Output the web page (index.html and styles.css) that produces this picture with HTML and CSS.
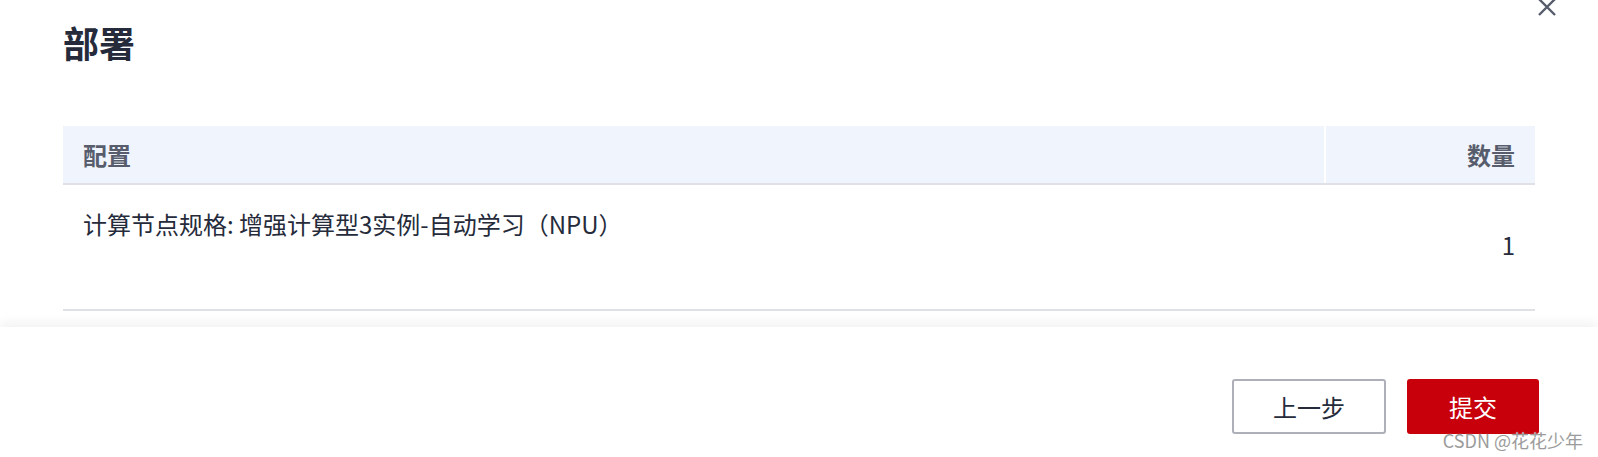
FILE: index.html
```html
<!DOCTYPE html>
<html lang="zh-CN">
<head>
<meta charset="utf-8">
<title>部署</title>
<link rel="stylesheet" href="styles.css">
</head>
<body>
<div class="dialog">
  <button class="close" aria-label="关闭">
    <svg width="20" height="20" viewBox="0 0 20 20"><path d="M2 2 L18 18 M18 2 L2 18" stroke="#575d6c" stroke-width="2.4" fill="none"/></svg>
  </button>
  <h1 class="title">部署</h1>
  <table class="table">
    <thead>
      <tr><th class="col-config">配置</th><th class="col-count">数量</th></tr>
    </thead>
    <tbody>
      <tr><td class="cell-config">计算节点规格: 增强计算型3实例-自动学习（NPU）</td><td class="cell-count">1</td></tr>
    </tbody>
  </table>
</div>
<div class="footer">
  <button class="btn btn-default">上一步</button>
  <button class="btn btn-primary">提交</button>
</div>
<div class="watermark">CSDN @花花少年</div>
</body>
</html>
```
FILE: styles.css
```css
* { box-sizing: border-box; }
html, body { margin: 0; padding: 0; background: #fff; }
body {
  font-family: "Noto Sans CJK SC", "Noto Sans", sans-serif;
  color: #252b3a;
  width: 1598px;
  height: 457px;
  overflow: hidden;
  position: relative;
}
.dialog {
  padding: 18px 63px 0 63px;
  position: relative;
}
.close {
  position: absolute;
  top: -3px;
  right: 41px;
  width: 20px;
  height: 20px;
  padding: 0;
  border: 0;
  background: none;
  display: block;
}
.close svg { display: block; }
.title {
  margin: 0 0 60px 0;
  font-size: 36px;
  line-height: 48px;
  font-weight: 700;
  color: #252b3a;
}
.table {
  width: 100%;
  border-collapse: collapse;
  border-spacing: 0;
  table-layout: fixed;
}
.table th {
  height: 58px;
  background: #f0f4fc;
  border-bottom: 2px solid #dfe1e6;
  font-size: 24px;
  line-height: 32px;
  font-weight: 700;
  color: #575d6c;
  padding: 0 20px;
  vertical-align: middle;
}
.col-config { text-align: left; border-right: 2px solid #fff; }
.col-count { text-align: right; width: 210px; }
.table td {
  height: 126px;
  border-bottom: 2px solid #dfe1e6;
  font-size: 24px;
  line-height: 32px;
  color: #252b3a;
  padding: 0 20px;
}
.cell-config { vertical-align: top; padding-top: 23px !important; }
.cell-count { vertical-align: middle; text-align: right; padding-bottom: 4px !important; }
.footer {
  margin-top: 16px;
  height: 131px;
  padding: 52px 59px 0 0;
  display: flex;
  justify-content: flex-end;
  align-items: flex-start;
  gap: 21px;
  background: #fff;
  box-shadow: 0 -5px 10px rgba(0, 0, 0, 0.05);
}
.btn {
  height: 55px;
  border-radius: 3px;
  font-family: "Noto Sans CJK SC", "Noto Sans", sans-serif;
  font-size: 24px;
  line-height: 32px;
  padding: 0;
  cursor: pointer;
}
.btn-default {
  width: 154px;
  background: #fff;
  border: 2px solid #adb0b8;
  color: #252b3a;
}
.btn-primary {
  width: 132px;
  background: #c7000b;
  border: 0;
  color: #fff;
}
.watermark {
  position: absolute;
  right: 15px;
  bottom: 7px;
  font-family: "Noto Sans CJK SC", "Noto Sans", sans-serif;
  font-size: 18px;
  line-height: 20px;
  color: #9b9b9b;
  text-shadow: 0 0 1px #fff;
}
```
